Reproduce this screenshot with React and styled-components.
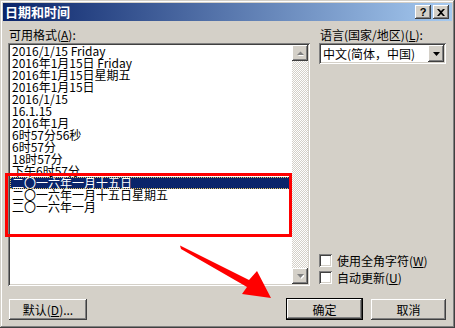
import React from "react";
import styled, { createGlobalStyle } from "styled-components";

const Global = createGlobalStyle`
  html, body {
    margin: 0;
    padding: 0;
    background: #d4d0c8;
  }
  body {
    font-family: "Noto Sans CJK SC", "Liberation Sans", sans-serif;
    font-size: 12px;
    color: #000;
  }
`;

const raised = `
  box-shadow: inset -1px -1px #404040, inset 1px 1px #ffffff,
    inset -2px -2px #808080, inset 2px 2px #d4d0c8;
`;

const sunken = `
  box-shadow: inset 1px 1px #808080, inset -1px -1px #ffffff,
    inset 2px 2px #404040, inset -2px -2px #d4d0c8;
`;

const formats = [
  "2016/1/15 Friday",
  "2016年1月15日 Friday",
  "2016年1月15日星期五",
  "2016年1月15日",
  "2016/1/15",
  "16.1.15",
  "2016年1月",
  "6时57分56秒",
  "6时57分",
  "18时57分",
  "下午6时57分",
  "二〇一六年一月十五日",
  "二〇一六年一月十五日星期五",
  "二〇一六年一月",
];

const App = () => {
  const [selected, setSelected] = React.useState(11);
  const [fullWidth, setFullWidth] = React.useState(false);
  const [autoUpdate, setAutoUpdate] = React.useState(false);

  return (
    <Window>
      <Global />
      <TitleBar>
        <Title>日期和时间</Title>
        <TitleButtons>
          <TitleButton>?</TitleButton>
          <TitleButton>
            <svg width="8" height="7" viewBox="0 0 8 7">
              <path d="M0 0h2l2 2 2-2h2L5 3.5 8 7H6L4 5 2 7H0l3-3.5z" fill="#000" />
            </svg>
          </TitleButton>
        </TitleButtons>
      </TitleBar>

      <Main>
        <LeftColumn>
          <Label>
            可用格式(<u>A</u>):
          </Label>
          <ListBox>
            <Items>
              {formats.map((f, i) => (
                <Item key={f} active={i === selected} onClick={() => setSelected(i)}>
                  {f}
                </Item>
              ))}
            </Items>
            <ScrollBar>
              <ScrollButton>
                <svg width="7" height="5" viewBox="0 0 7 5">
                  <path d="M1 5L4 2L7 5z" fill="#fff" />
                  <path d="M0 4L3.5 0.5L7 4z" fill="#808080" />
                </svg>
              </ScrollButton>
              <Track />
              <ScrollButton>
                <svg width="7" height="5" viewBox="0 0 7 5">
                  <path d="M1 1h7L4.5 5z" fill="#fff" />
                  <path d="M0 0h7L3.5 4z" fill="#808080" />
                </svg>
              </ScrollButton>
            </ScrollBar>
          </ListBox>
        </LeftColumn>

        <RightColumn>
          <Label>
            语言(国家/地区)(<u>L</u>):
          </Label>
          <Combo>
            <ComboText>中文(简体，中国)</ComboText>
            <DropButton>
              <svg width="7" height="4" viewBox="0 0 7 4">
                <path d="M0 0h7L3.5 4z" fill="#000" />
              </svg>
            </DropButton>
          </Combo>
          <Checks>
            <CheckRow onClick={() => setFullWidth(!fullWidth)}>
              <CheckBox>{fullWidth ? "✓" : ""}</CheckBox>
              <span>
                使用全角字符(<u>W</u>)
              </span>
            </CheckRow>
            <CheckRow onClick={() => setAutoUpdate(!autoUpdate)}>
              <CheckBox>{autoUpdate ? "✓" : ""}</CheckBox>
              <span>
                自动更新(<u>U</u>)
              </span>
            </CheckRow>
          </Checks>
        </RightColumn>
      </Main>

      <ButtonRow>
        <Button width={78}>
          <span>
            默认(<u>D</u>)...
          </span>
        </Button>
        <Spacer />
        <Button width={77} primary>
          确定
        </Button>
        <Button width={75}>取消</Button>
      </ButtonRow>

      <Highlight />
      <Arrow width="455" height="328" viewBox="0 0 455 328">
        <polygon
          points="180,245.5 249,280 257,271 271,298 242,294 247,287 181,249"
          fill="#ff0000"
        />
      </Arrow>
    </Window>
  );
};

const Window = styled.div`
  position: relative;
  width: 455px;
  height: 328px;
  box-sizing: border-box;
  padding: 3px;
  background: #d4d0c8;
  display: flex;
  flex-direction: column;
  overflow: hidden;
  box-shadow: inset -1px -1px #404040, inset 1px 1px #d4d0c8,
    inset -2px -2px #808080, inset 2px 2px #ffffff;
`;

const TitleBar = styled.div`
  height: 18px;
  display: flex;
  align-items: center;
  justify-content: space-between;
  padding: 0 3px 0 2px;
  background: linear-gradient(to right, #0a246a, #a6caf0);
`;

const Title = styled.div`
  color: #fff;
  font-weight: bold;
  font-size: 13px;
  line-height: 18px;
`;

const TitleButtons = styled.div`
  display: flex;
  gap: 2px;
`;

const TitleButton = styled.div`
  width: 16px;
  height: 14px;
  box-sizing: border-box;
  background: #d4d0c8;
  ${raised}
  display: flex;
  align-items: center;
  justify-content: center;
  font-family: "Liberation Sans", sans-serif;
  font-weight: bold;
  font-size: 11px;
  line-height: 14px;
`;

const Main = styled.div`
  display: flex;
  gap: 9px;
  padding: 6px 6px 0 5px;
`;

const LeftColumn = styled.div`
  width: 302px;
  display: flex;
  flex-direction: column;
`;

const RightColumn = styled.div`
  width: 127px;
  display: flex;
  flex-direction: column;
`;

const Label = styled.div`
  height: 15px;
  line-height: 15px;
  margin-bottom: 1px;
  padding-left: 1px;
  white-space: nowrap;
`;

const ListBox = styled.div`
  height: 243px;
  box-sizing: border-box;
  padding: 2px;
  background: #fff;
  ${sunken}
  display: flex;
`;

const Items = styled.div`
  flex: 1;
  overflow: hidden;
`;

const Item = styled.div`
  height: 12px;
  line-height: 12px;
  padding-left: 2px;
  white-space: nowrap;
  cursor: default;
  background: ${(p) => (p.active ? "#0a246a" : "transparent")};
  color: ${(p) => (p.active ? "#fff" : "#000")};
  outline: ${(p) => (p.active ? "1px dotted #e0c060" : "none")};
  outline-offset: -1px;
`;

const ScrollBar = styled.div`
  width: 16px;
  display: flex;
  flex-direction: column;
`;

const ScrollButton = styled.div`
  height: 16px;
  box-sizing: border-box;
  background: #d4d0c8;
  ${raised}
  display: flex;
  align-items: center;
  justify-content: center;
`;

const Track = styled.div`
  flex: 1;
  background: repeating-conic-gradient(#ffffff 0 25%, #d4d0c8 0 50%) 0 0 / 2px 2px;
`;

const Combo = styled.div`
  height: 21px;
  box-sizing: border-box;
  padding: 2px;
  background: #fff;
  ${sunken}
  display: flex;
  align-items: center;
`;

const ComboText = styled.div`
  flex: 1;
  padding-left: 2px;
  line-height: 17px;
  white-space: nowrap;
`;

const DropButton = styled.div`
  width: 16px;
  height: 17px;
  box-sizing: border-box;
  background: #d4d0c8;
  ${raised}
  display: flex;
  align-items: center;
  justify-content: center;
`;

const Checks = styled.div`
  margin-top: auto;
  margin-bottom: 2px;
  display: flex;
  flex-direction: column;
  gap: 4px;
`;

const CheckRow = styled.label`
  display: flex;
  align-items: center;
  gap: 5px;
  height: 13px;
  line-height: 13px;
  white-space: nowrap;
  cursor: default;
`;

const CheckBox = styled.span`
  width: 13px;
  height: 13px;
  box-sizing: border-box;
  background: #fff;
  ${sunken}
  font-size: 10px;
  line-height: 13px;
  text-align: center;
`;

const ButtonRow = styled.div`
  display: flex;
  align-items: center;
  gap: 8px;
  padding: 12px 6px 0 6px;
`;

const Spacer = styled.div`
  flex: 1;
`;

const Button = styled.div`
  width: ${(p) => p.width}px;
  height: ${(p) => (p.primary ? 22 : 21)}px;
  box-sizing: border-box;
  background: #d4d0c8;
  border: ${(p) => (p.primary ? "1px solid #000" : "none")};
  ${raised}
  display: flex;
  align-items: center;
  justify-content: center;
  line-height: 21px;
  cursor: default;
`;

const Highlight = styled.div`
  position: absolute;
  left: 5px;
  top: 173px;
  width: 287px;
  height: 64px;
  box-sizing: border-box;
  border: 3px solid #ff0000;
  pointer-events: none;
`;

const Arrow = styled.svg`
  position: absolute;
  left: 0;
  top: 0;
  pointer-events: none;
`;

export default App;
